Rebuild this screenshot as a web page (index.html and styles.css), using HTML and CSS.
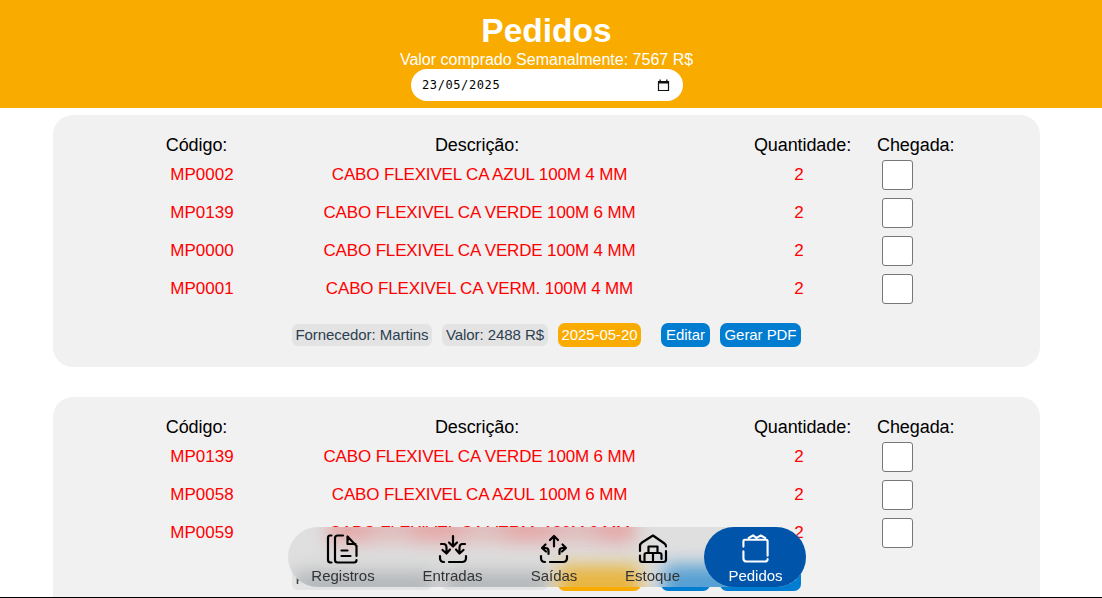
FILE: index.html
```
<!DOCTYPE html>
<html lang="pt-BR">
<head>
<meta charset="utf-8">
<title>Pedidos</title>
<link rel="stylesheet" href="styles.css">
</head>
<body>
<header class="header">
  <h1 class="title">Pedidos</h1>
  <p class="total">Valor comprado Semanalmente: 7567 R$</p>
  <div class="date-field"><span>23/05/2025</span>
    <svg class="calendar" viewBox="0 0 13 13"><path d="M1.500 2.500h10v9h-10z" fill="none" stroke="#111" stroke-width="1.200"/><path d="M1 2h11v2.600H1zM2.500.5h1.300V3H2.500zM9.200.5h1.300V3H9.200z" fill="#111"/></svg>
  </div>
</header>
<main class="orders">
  <section class="card">
    <div class="head"><span>Código:</span><span>Descrição:</span><span>Quantidade:</span><span>Chegada:</span></div>
    <div class="row"><span>MP0002</span><span class="desc">CABO FLEXIVEL CA AZUL 100M 4 MM</span><span>2</span><i class="check"></i></div>
    <div class="row"><span>MP0139</span><span class="desc">CABO FLEXIVEL CA VERDE 100M 6 MM</span><span>2</span><i class="check"></i></div>
    <div class="row"><span>MP0000</span><span class="desc">CABO FLEXIVEL CA VERDE 100M 4 MM</span><span>2</span><i class="check"></i></div>
    <div class="row"><span>MP0001</span><span class="desc">CABO FLEXIVEL CA VERM. 100M 4 MM</span><span>2</span><i class="check"></i></div>
    <div class="footer"><span class="tag supplier">Fornecedor: Martins</span><span class="tag value">Valor: 2488 R$</span><span class="date">2025-05-20</span><a class="button edit">Editar</a><a class="button pdf">Gerar PDF</a></div>
  </section>
  <section class="card">
    <div class="head"><span>Código:</span><span>Descrição:</span><span>Quantidade:</span><span>Chegada:</span></div>
    <div class="row"><span>MP0139</span><span class="desc">CABO FLEXIVEL CA VERDE 100M 6 MM</span><span>2</span><i class="check"></i></div>
    <div class="row"><span>MP0058</span><span class="desc">CABO FLEXIVEL CA AZUL 100M 6 MM</span><span>2</span><i class="check"></i></div>
    <div class="row"><span>MP0059</span><span class="desc narrow">CABO FLEXIVEL CA VERM. 100M 6 MM</span><span>2</span><i class="check"></i></div>
    <div class="footer"><span class="tag supplier">Fornecedor: Martins</span><span class="tag value">Valor: 5079 R$</span><span class="date">2025-05-20</span><a class="button edit">Editar</a><a class="button pdf">Gerar PDF</a></div>
  </section>
</main>
<nav class="nav">
  <div class="glass"><i class="glow red"></i><i class="glow gray-a"></i><i class="glow gray-b"></i><i class="glow amber"></i><i class="glow blue"></i></div>
  <a class="item records"><svg class="icon" viewBox="0 0 32 30"><path d="M5.500 1.500H4Q2 1.500 2 4v22q0 2.500 2.500 2.500h1"/><path d="M17 1.500h-5Q9 1.500 9 4v22q0 2.500 2.500 2.500H28q2.500 0 2.500-2.500M21.500 2.500V10h8M21.500 2.500L30.500 12v10M15.500 16.500h6M15.500 22h9"/></svg><span>Registros</span></a>
  <a class="item entries"><svg class="icon" viewBox="0 0 30 30"><path d="M15 2v10M11 8.500l4 4 4-4M3 10h2.500q3 0 3 4v5M4.500 16l4 3.500 3.500-4M27 10h-2.500q-3 0-3 4v5M18 15.500l3.500 4 4-3.500M2 22v2q0 4 4 4M11 28h13q4 0 4-4v-2"/></svg><span>Entradas</span></a>
  <a class="item exits"><svg class="icon" viewBox="0 0 30 30"><path d="M15 12.500V2.500M11 6l4-4 4 4M9.500 20v-3q0-3-3-3H3M6.500 10.500L3 14l4 3.500M20.500 20v-3q0-3 3-3H27M23.500 10.500L27 14l-4 3.500M2 22v2q0 4 4 4M11 28h13q4 0 4-4v-2"/></svg><span>Saídas</span></a>
  <a class="item stock"><svg class="icon" viewBox="0 0 30 30"><path d="M2 17v-5q0-2 2-3.500l11-7 11.500 8q1.500 1 1.500 3M2 21.500v4q0 2.500 2.500 2.500h21q2.500 0 2.500-2.500V17M10.500 18v-5.500h9V18M6.500 27v-6q0-2 2-2h13q2 0 2 2v4M15 19v8"/></svg><span>Estoque</span></a>
  <a class="item active"><svg class="icon" viewBox="0 0 30 30"><path d="M2.500 13V7.500Q2.500 6 4 6h22Q27.500 6 27.500 7.500v15M2.500 18v7q0 3.500 3.500 3.500h18.500q3 0 3-2.500M8 4l4.500-2.500L16 4l4.500-2.500L25 4"/></svg><span>Pedidos</span></a>
</nav>
<div class="edge"></div>
</body>
</html>
```
FILE: styles.css
```
* { box-sizing: border-box; }
body { margin: 0; height: 598px; overflow: hidden; background: #fff; font-family: "Liberation Sans", Arial, sans-serif; }
.header { height: 108px; padding: 11px 9px 0 0; background: #faab00; color: #fff; display: flex; flex-direction: column; align-items: center; }
.title { margin: 0; font-size: 33.500px; line-height: 39px; }
.total { margin: 0; font-size: 16px; line-height: 19px; }
.date-field { width: 272px; height: 32px; margin-left: 1px; padding: 0 13px 0 11px; border-radius: 16px; background: #fff; color: #000; display: flex; align-items: center; justify-content: space-between; font: 13px "DejaVu Sans Mono", monospace; }
.date-field span { font-size: 12px; letter-spacing: .6px; }
.calendar { width: 13px; height: 13px; }
.orders { height: 490px; overflow: hidden; padding: 7px 0 0 53px; display: flex; flex-direction: column; gap: 30px; }
.card { flex: none; width: 987px; height: 252px; padding-top: 19px; border-radius: 20px; background: #f1f1f1; }
.head { display: grid; grid-template-columns: 101px 460px 192px 98px; padding-left: 93px; height: 22px; font-size: 18px; line-height: 22px; text-align: center; letter-spacing: -.08px; }
.head span:nth-child(3) { padding-right: 1px; }
.head span:last-child { text-align: left; margin-left: -22px; }
.row { display: grid; grid-template-columns: 100px 455px 184px 31px; padding-left: 99px; height: 38px; color: #f00; font-size: 17px; line-height: 37px; text-align: center; }
.desc { letter-spacing: -.15px; }
.narrow { letter-spacing: -.35px; }
.check { width: 31px; height: 30px; margin: 4px 0 0 -9px; border: 1px solid #777; border-radius: 3px; background: #fff; }
.footer { height: 40px; margin-top: 7px; padding-left: 239px; display: flex; align-items: center; font-size: 15px; color: #2c3e50; }
.tag { height: 22px; margin-right: 10px; border-radius: 6px; background: #e3e3e3; line-height: 22px; text-align: center; letter-spacing: -.06px; }
.supplier { width: 140px; }
.value { width: 106px; }
.date, .button { height: 24px; border-radius: 7px; color: #fff; line-height: 24px; text-align: center; letter-spacing: -.06px; }
.date { width: 83px; background: #faab00; margin-right: 20px; }
.button { background: #007dd1; }
.edit { width: 49px; margin-right: 10px; }
.pdf { width: 81px; }
.nav { position: fixed; left: 288px; top: 527px; width: 518px; height: 60px; border-radius: 30px; display: flex; color: #333; font-size: 15px; }
.glass { position: absolute; inset: 0; border-radius: 30px; background: #dfdfdf; overflow: hidden; }
.glow { position: absolute; filter: blur(9px); }
.red { left: 40px; top: -14px; width: 308px; height: 30px; background: repeating-linear-gradient(90deg, #e4a8a8 0 34px, #e0bcbc 48px 78px, #e4a8a8 92px); }
.gray-a { left: 6px; top: 44px; width: 140px; height: 30px; background: #b4b7ba; }
.gray-b { left: 156px; top: 44px; width: 106px; height: 30px; background: #b4b7ba; }
.amber { left: 270px; top: 38px; width: 82px; height: 40px; background: #e8b540; }
.blue { left: 375px; top: 38px; width: 140px; height: 40px; background: #559fd3; }
.item { position: relative; height: 60px; padding-top: 7px; display: flex; flex-direction: column; align-items: center; line-height: 18px; }
.icon { width: 30px; height: 30px; margin-bottom: 3px; fill: none; stroke: #000; stroke-width: 2.200; stroke-linecap: round; stroke-linejoin: round; }
.records { width: 110px; }
.records .icon { width: 32px; margin-left: -2px; }
.entries { width: 109px; }
.exits { width: 94px; }
.stock { width: 103px; }
.active { width: 102px; border-radius: 30px; background: #0054aa; color: #fff; }
.active .icon { stroke: #fff; width: 29px; height: 29px; margin-bottom: 4px; }
.active span { margin-left: 1px; }
.edge { position: fixed; left: 0; right: 0; bottom: 0; height: 1px; background: #000; }
```
